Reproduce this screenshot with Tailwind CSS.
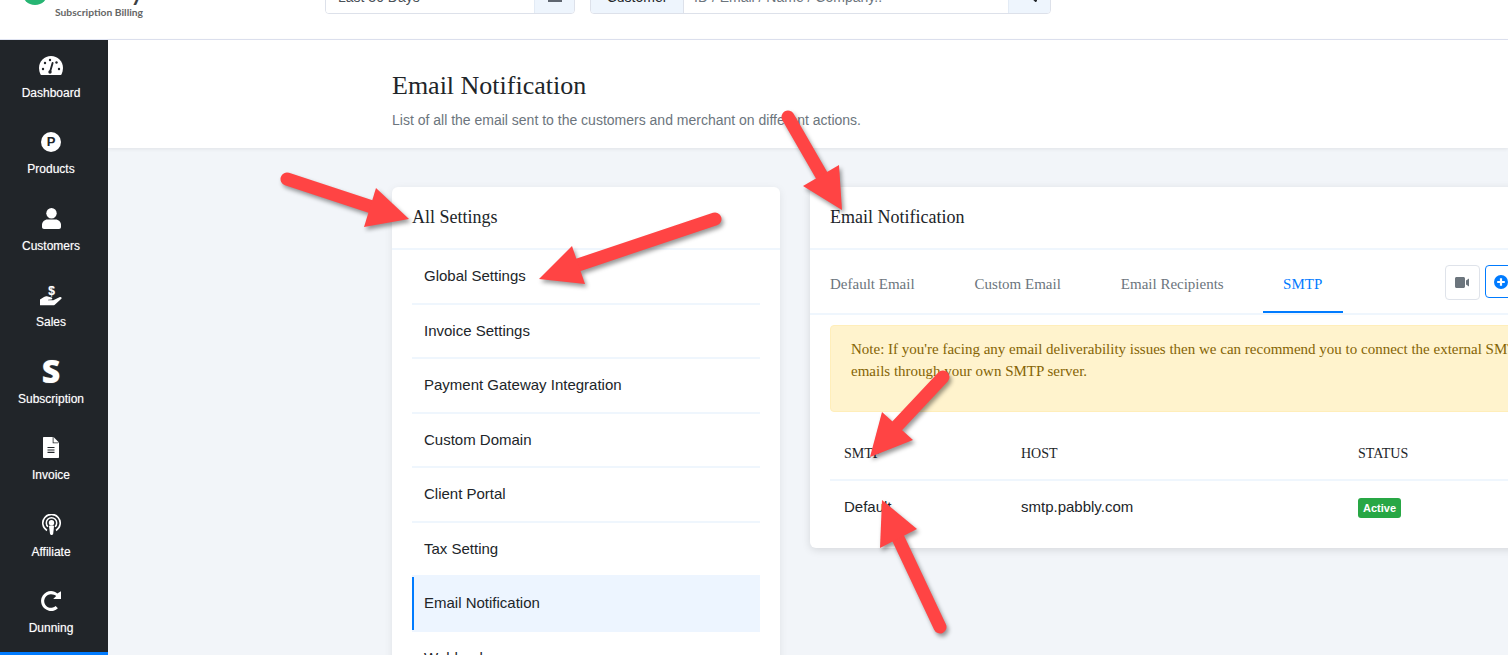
<!DOCTYPE html>
<html lang="en">
<head>
  <meta charset="UTF-8" />
  <title>Email Notification</title>
  <script src="https://cdn.jsdelivr.net/npm/@tailwindcss/browser@4"></script>
</head>
<body class="bg-[#f2f5f9] font-['Liberation_Sans',Arial,sans-serif] text-[#212529]">
<div class="relative h-[655px] w-[1508px] overflow-hidden">

  <!-- top bar, scrolled so only its bottom shows -->
  <header class="flex h-[40px] items-start overflow-hidden border-b border-[#dfe3f1] bg-white">
    <div class="relative -mt-[30px] h-[49px] w-[325px] shrink-0">
      <div class="absolute left-[22px] top-[9px] h-[26px] w-[26px] rounded-full bg-[#27b573]"></div>
      <div class="absolute left-[54px] top-0 font-['Lato',sans-serif] text-[31px] leading-[36px] text-[#3c4043]">Pabbly</div>
      <div class="absolute left-[55px] top-[36px] font-['Lato',sans-serif] text-[10.3px] font-bold leading-[13px] text-[#666]">Subscription Billing</div>
    </div>
    <div class="-mt-[24px] flex h-[38px] w-[250px] overflow-hidden rounded border border-[#dde1ea]">
      <div class="flex-1 bg-white pl-3 text-[14px] leading-[40px] text-[#495057]">Last 30 Days</div>
      <div class="flex w-[40px] items-center justify-center border-l border-[#e3ebf5] bg-[#eef5fd]">
        <svg class="h-[14px] w-[14px]" viewBox="0 0 14 14" fill="#5f6670"><path d="M0 3h14v11H0zM2 6v2h2V6zm4 0v2h2V6zm4 0v2h2V6zM2 10v2h2v-2zm4 0v2h2v-2zm4 0v2h2v-2z" fill-rule="evenodd"/></svg>
      </div>
    </div>
    <div class="-mt-[24px] ml-[15px] flex h-[38px] w-[461px] overflow-hidden rounded border border-[#dde1ea]">
      <div class="w-[93px] border-r border-[#dde1ea] bg-[#eef5fd] text-center text-[14px] leading-[40px]">Customer</div>
      <div class="flex-1 bg-white pl-[10px] text-[14px] leading-[40px] text-[#6c757d]">ID / Email / Name / Company..</div>
      <div class="flex w-[42px] items-center justify-center border-l border-[#e3ebf5] bg-[#eef5fd]">
        <svg class="h-[14px] w-[14px]" viewBox="0 0 14 14" fill="none" stroke="#212529" stroke-width="2.4"><circle cx="6" cy="6" r="4.4"/><path d="M9.5 9.5l4 4"/></svg>
      </div>
    </div>
  </header>

  <div class="flex">
    <!-- sidebar -->
    <nav class="h-[615px] w-[108px] shrink-0 bg-[#212529] text-[12px] leading-[18px] text-white [text-shadow:0_0_1px_rgba(255,255,255,0.5)]">
      <a class="flex h-[76.5px] flex-col items-center pr-[6px] pt-[13px]">
        <span class="flex h-[24px] items-center">
          <svg class="h-[19px] w-[24px]" viewBox="0 0 24 19"><path fill="#fff" d="M12 0C5.4 0 0 5.4 0 12c0 2.200.5 4.300 1.400 6.300.2.400.6.700 1 .7h19.200c.4 0 .8-.3 1-.7.9-2 1.400-4.100 1.400-6.300C24 5.400 18.600 0 12 0z"/><path stroke="#212529" stroke-width="1.900" stroke-linecap="round" d="M11 16l2.600-9"/><circle cx="11" cy="16" r="1.700" fill="#212529"/><g fill="#212529"><circle cx="4" cy="13" r="1.200"/><circle cx="6" cy="7" r="1.200"/><circle cx="11" cy="4" r="1.200"/><circle cx="17.500" cy="6.500" r="1.200"/><circle cx="20" cy="13" r="1.200"/></g></svg>
        </span>
        <span class="mt-[6.6px]">Dashboard</span>
      </a>
      <a class="flex h-[76.5px] flex-col items-center pr-[6px] pt-[13px]">
        <span class="flex h-[24px] items-center">
          <span class="flex h-[20px] w-[20px] items-center justify-center rounded-full bg-white text-[13px] font-bold text-[#212529] [text-shadow:none]">P</span>
        </span>
        <span class="mt-[6.6px]">Products</span>
      </a>
      <a class="flex h-[76.5px] flex-col items-center pr-[6px] pt-[13px]">
        <span class="flex h-[24px] items-center">
          <svg class="h-[21px] w-[19px]" viewBox="0 0 19 21" fill="#fff"><circle cx="9.500" cy="5.200" r="5.200"/><path d="M5.500 11.500h8c3 0 5.500 2.400 5.500 5.500v2c0 1.100-.9 2-2 2H2c-1.100 0-2-.9-2-2v-2c0-3.100 2.500-5.500 5.500-5.500z"/></svg>
        </span>
        <span class="mt-[6.6px]">Customers</span>
      </a>
      <a class="flex h-[76.5px] flex-col items-center pr-[6px] pt-[13px]">
        <span class="flex h-[24px] items-center">
          <svg class="h-[22px] w-[23px]" viewBox="0 0 23 22" fill="#fff"><text x="11.500" y="11" text-anchor="middle" font-family="Liberation Sans" font-weight="700" font-size="12">$</text><path d="M0 15.500l4-2.500c1.300-.7 2.500-.8 3.800-.4l3.700 1c1.100.3 1.100 1.900-.2 2l-3 .1c-.4.1-.4.600 0 .6l5 0 6.600-3.200c1.400-.5 2.400 1 1.200 2L14.800 20.700c-.5.400-1 .500-1.600.500H0z"/></svg>
        </span>
        <span class="mt-[6.6px]">Sales</span>
      </a>
      <a class="flex h-[76.5px] flex-col items-center pr-[6px] pt-[13px]">
        <span class="flex h-[24px] items-center font-['Open_Sans',sans-serif] text-[32px] font-black leading-[24px]">S</span>
        <span class="mt-[6.6px]">Subscription</span>
      </a>
      <a class="flex h-[76.5px] flex-col items-center pr-[6px] pt-[13px]">
        <span class="flex h-[24px] items-center">
          <svg class="h-[21px] w-[16px]" viewBox="0 0 16 21"><path fill="#fff" d="M1 0h9.500L16 5.500V20c0 .6-.4 1-1 1H1c-.6 0-1-.4-1-1V1c0-.6.4-1 1-1z"/><path fill="#212529" d="M10.500 0v5.500H16l-1 .8H9.700V0zM4.500 10h7v1.100h-7zM4.500 12.400h7v1.100h-7zM4.500 14.800h7v1.100h-7z"/></svg>
        </span>
        <span class="mt-[6.6px]">Invoice</span>
      </a>
      <a class="flex h-[76.5px] flex-col items-center pr-[6px] pt-[13px]">
        <span class="flex h-[24px] items-center">
          <svg class="h-[21px] w-[19px]" viewBox="0 0 19 21" fill="none" stroke="#fff"><path stroke-width="1.600" d="M5 16.500a8.700 8.700 0 1 1 9 0"/><path stroke-width="1.500" d="M6 12.800a5.200 5.200 0 1 1 7 0"/><circle cx="9.500" cy="8.700" r="2.700" fill="#fff" stroke="none"/><path fill="#fff" stroke="none" d="M7 12.500c0-.6.6-1 1.200-1h2.600c.6 0 1.200.4 1.200 1l-.8 7.300c-.1.700-.6 1.200-1.200 1.200h-.8c-.6 0-1.100-.5-1.200-1.200z"/></svg>
        </span>
        <span class="mt-[6.6px]">Affiliate</span>
      </a>
      <a class="flex h-[76.5px] flex-col items-center pr-[6px] pt-[13px]">
        <span class="flex h-[24px] items-center">
          <svg class="h-[20px] w-[20px]" viewBox="0 0 20 20" fill="#fff"><path d="M10 0c2.500 0 4.700 1 6.300 2.600L20 .2V8h-7.800l3-3C14 3.900 12.100 3.200 10 3.200A6.800 6.800 0 1 0 14.600 15l2.300 2.300A10 10 0 1 1 10 0z"/></svg>
        </span>
        <span class="mt-[6.6px]">Dunning</span>
      </a>
      <div class="h-[3px] bg-[#007bff]"></div>
    </nav>

    <main class="min-w-0 flex-1">
      <div class="h-[108px] bg-white pl-[284px] pt-[30px] shadow-[0_1px_4px_rgba(0,0,0,0.08)]">
        <h1 class="font-['Liberation_Serif',serif] text-[26px] leading-[32px]">Email Notification</h1>
        <p class="mt-[8px] text-[14px] leading-[21px] text-[#6c757d]">List of all the email sent to the customers and merchant on different actions.</p>
      </div>

      <div class="flex items-start gap-[30px] pl-[284px] pt-[39px]">
        <!-- settings list -->
        <section class="h-[500px] w-[388px] shrink-0 rounded-md bg-white shadow-[0_2px_8px_rgba(0,0,0,0.08)]">
          <h2 class="h-[63px] border-b-2 border-[#eff6fd] pl-[20px] font-['Liberation_Serif',serif] text-[18px] leading-[60px]">All Settings</h2>
          <ul class="px-[20px] text-[15px]">
            <li class="h-[54.500px] border-b-2 border-[#eff6fd] pl-[12px] leading-[52px]">Global Settings</li>
            <li class="h-[54.500px] border-b-2 border-[#eff6fd] pl-[12px] leading-[52px]">Invoice Settings</li>
            <li class="h-[54.500px] border-b-2 border-[#eff6fd] pl-[12px] leading-[52px]">Payment Gateway Integration</li>
            <li class="h-[54.500px] border-b-2 border-[#eff6fd] pl-[12px] leading-[52px]">Custom Domain</li>
            <li class="h-[54.500px] border-b-2 border-[#eff6fd] pl-[12px] leading-[52px]">Client Portal</li>
            <li class="h-[54.500px] border-b-2 border-[#eff6fd] pl-[12px] leading-[52px]">Tax Setting</li>
            <li class="-mt-[2px] flex h-[57px] items-center bg-[#edf5ff] py-[2px]"><span class="h-full w-[2px] bg-[#007bff]"></span><span class="pl-[10px]">Email Notification</span></li>
            <li class="pl-[12px] leading-[52px]">Webhooks</li>
          </ul>
        </section>

        <!-- email notification card -->
        <section class="h-[361px] w-[860px] shrink-0 rounded-md bg-white shadow-[0_2px_8px_rgba(0,0,0,0.12)]">
          <h2 class="h-[63px] border-b-2 border-[#eff6fd] pl-[20px] font-['Liberation_Serif',serif] text-[18px] leading-[60px]">Email Notification</h2>
          <div class="flex h-[65px] items-start border-b-2 border-[#eff6fd] font-['Liberation_Serif',serif] text-[15px] text-[#6c757d]">
            <a class="h-[63px] px-[20px] leading-[69px]">Default Email</a>
            <a class="h-[63px] px-[20px] pl-[40px] leading-[69px]">Custom Email</a>
            <a class="h-[63px] px-[20px] pl-[40px] leading-[69px]">Email Recipients</a>
            <a class="ml-[19px] h-[63px] w-[80px] border-b-2 border-[#007bff] text-center leading-[69px] text-[#007bff]">SMTP</a>
            <button class="ml-[102px] mt-[15px] flex h-[35px] w-[35px] items-center justify-center rounded border border-[#dfe3ea] bg-white">
              <svg class="h-[11px] w-[14px]" viewBox="0 0 14 11" fill="#6c757d"><path d="M1.500 0h7C9.300 0 10 .7 10 1.500v8c0 .8-.7 1.500-1.500 1.500h-7C.7 11 0 10.300 0 9.500v-8C0 .7.7 0 1.500 0zM11 3.500L14 1.500v8l-3-2z"/></svg>
            </button>
            <button class="ml-[5px] mt-[15px] flex h-[33px] w-[120px] items-center rounded border border-[#007bff] bg-white pl-[8px]">
              <svg class="h-[14px] w-[14px] shrink-0" viewBox="0 0 14 14"><circle cx="7" cy="7" r="7" fill="#007bff"/><path d="M7 3.200v7.600M3.200 7h7.600" stroke="#fff" stroke-width="2.200"/></svg>
            </button>
          </div>
          <div class="mx-[20px] mt-[10px] h-[87px] whitespace-nowrap rounded border border-[#ffeeba] bg-[#fff3cd] pl-[20px] pt-[12px] font-['Liberation_Serif',serif] text-[15px] leading-[22px] text-[#856404]">
            Note: If you're facing any email deliverability issues then we can recommend you to connect the external SMTP server to send the<br>emails through your own SMTP server.
          </div>
          <table class="ml-[20px] mt-[15px] w-[820px] table-fixed text-left">
            <thead class="font-['Liberation_Serif',serif] text-[14px]">
              <tr class="h-[53px] border-b-2 border-[#eff6fd]">
                <th class="w-[191px] pl-[14px] font-normal">SMTP</th>
                <th class="w-[337px] pl-0 font-normal">HOST</th>
                <th class="font-normal">STATUS</th>
              </tr>
            </thead>
            <tbody class="text-[15px]">
              <tr class="h-[54px]">
                <td class="pl-[14px]">Default</td>
                <td>smtp.pabbly.com</td>
                <td><span class="inline-block h-[20px] rounded-[3px] bg-[#28a745] px-[5px] text-[11px] font-bold leading-[20px] text-white">Active</span></td>
              </tr>
            </tbody>
          </table>
        </section>
      </div>
    </main>
  </div>

  <!-- annotation arrows drawn over the screenshot -->
  <svg class="pointer-events-none absolute inset-0 z-10 h-[655px] w-[1508px] drop-shadow-[2px_3px_2px_rgba(0,0,0,0.4)]" viewBox="0 0 1508 655" fill="#ff4444" stroke="#ff4444">
    <path stroke-width="13" stroke-linecap="round" d="M287 179L372 207"/>
    <polygon stroke="none" points="409,219 376,188 364,227"/>
    <path stroke-width="13" stroke-linecap="round" d="M715 219L578 265"/>
    <polygon stroke="none" points="539,279 572,246 585,284"/>
    <path stroke-width="13" stroke-linecap="round" d="M788 117L822 176"/>
    <polygon stroke="none" points="842,210 839,165 803,186"/>
    <path stroke-width="13" stroke-linecap="round" d="M943 377L897 426"/>
    <polygon stroke="none" points="870,457 882,412 913,440"/>
    <path stroke-width="13" stroke-linecap="round" d="M940 627L898 538"/>
    <polygon stroke="none" points="882,500 917,529 880,548"/>
  </svg>
</div>
</body>
</html>
